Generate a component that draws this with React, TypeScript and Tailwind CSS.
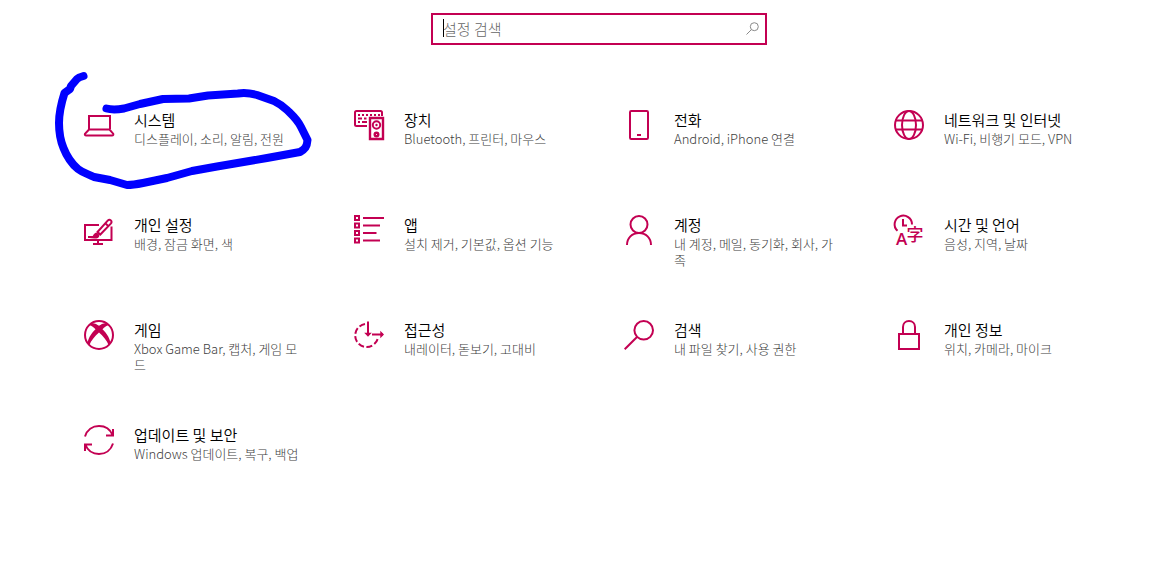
import type { ReactNode } from "react";

type Category = {
  title: string;
  description: string;
  icon: ReactNode;
};

const categories: Category[] = [
  {
    title: "시스템",
    description: "디스플레이, 소리, 알림, 전원",
    icon: (
      <>
        <path d="M5 19V6h21v13" />
        <path d="M5 19.500h20.500l3.700 4.200c.4.900 0 1.800-1.200 1.800H2.200c-1.200 0-1.600-.9-1.200-1.800z" />
      </>
    ),
  },
  {
    title: "장치",
    description: "Bluetooth, 프린터, 마우스",
    icon: (
      <>
        <path d="M13 16H2.500C1.500 16 1 15.500 1 14.500v-12C1 1.500 1.500 1 2.500 1h24c1 0 1.500.5 1.500 1.500V6" />
        <path d="M4 5h22" strokeDasharray="2 2" />
        <path d="M4 8.500h4M10 8.500h2.500M4 12h2M8 12h5" />
        <path d="M16 8h13v21H16z" strokeWidth="2.400" />
        <circle cx="22.500" cy="15" r="3.700" />
        <circle cx="22.500" cy="15" r="1.200" fill="currentColor" stroke="none" />
        <circle cx="22.500" cy="24.500" r="1.800" strokeWidth="2.400" />
      </>
    ),
  },
  {
    title: "전화",
    description: "Android, iPhone 연결",
    icon: (
      <>
        <rect x="6" y="1" width="18" height="28" rx="1.200" />
        <path d="M13 25h4" />
      </>
    ),
  },
  {
    title: "네트워크 및 인터넷",
    description: "Wi-Fi, 비행기 모드, VPN",
    icon: (
      <>
        <circle cx="15" cy="15" r="14" />
        <ellipse cx="15" cy="15" rx="7" ry="14" />
        <path d="M2 10.500h26M2 19.500h26" />
      </>
    ),
  },
  {
    title: "개인 설정",
    description: "배경, 잠금 화면, 색",
    icon: (
      <>
        <path d="M15 10H1v15h26.500V11.500M14 25v4M9 29h10" />
        <path d="M13.500 17 23.700 5.700c1-1.100 2.300-1.100 3.200-.3s.9 2.100-.1 3.200L16.300 19.500z" />
        <path d="m21.500 8.500 3 2.800" />
        <path d="M4 22.700c4 0 4.500-1 5.800-3.400 1.100-1.900 3.100-2.100 4.500-.8 1.600 1.500 1.400 3.300-.4 4.400-2 1.100-5.900.6-9.900-.2z" fill="currentColor" stroke="none" />
        <path d="M4 22h7" />
      </>
    ),
  },
  {
    title: "앱",
    description: "설치 제거, 기본값, 옵션 기능",
    icon: (
      <>
        <path d="M1 1h4v4H1zM1 8.500h4v4H1zM1 16h4v4H1zM1 23.500h4v4H1z" />
        <path d="M9 3h21M9 10.500h17M9 18h13.500M9 25.500h17" />
      </>
    ),
  },
  {
    title: "계정",
    description: "내 계정, 메일, 동기화, 회사, 가족",
    icon: (
      <>
        <circle cx="15" cy="9.500" r="8.500" />
        <path d="M3 30c0-7 5-12 12-12s12 5 12 12" />
      </>
    ),
  },
  {
    title: "시간 및 언어",
    description: "음성, 지역, 날짜",
    icon: (
      <>
        <path d="M3.500 15.800A8.700 8.700 0 1 1 18 9.500M9 4v6.500h4" />
        <g fill="currentColor" stroke="none">
          <text x="2" y="30" fontSize="17" fontWeight="600" fontFamily="Open Sans, sans-serif">A</text>
          <text x="12.500" y="26" fontSize="17" fontWeight="500" fontFamily="Noto Sans CJK KR, sans-serif">字</text>
        </g>
      </>
    ),
  },
  {
    title: "게임",
    description: "Xbox Game Bar, 캡처, 게임 모드",
    icon: (
      <>
        <circle cx="15" cy="15" r="14" />
        <path d="M7 3.500C9.500 2.500 13 4.300 15 5.700c2-1.400 5.500-3.200 8-2.200l2.500 1.700c-2.300-.3-5 1.800-7 4.100 4.700 4.500 8 10.200 7.800 14.200l-1.600 1.700c-1.700-4.500-5.700-9.400-9.700-12.700-4 3.300-8 8.200-9.700 12.700l-1.600-1.700c-.2-4 3.100-9.700 7.800-14.200-2-2.300-4.700-4.400-7-4.100z" fill="currentColor" stroke="none" />
      </>
    ),
  },
  {
    title: "접근성",
    description: "내레이터, 돋보기, 고대비",
    icon: (
      <>
        <path d="M11 4.100A11.500 11.500 0 1 0 24 17.500" strokeDasharray="6 2.500" />
        <path d="M14 1.500V15M18 14.500h11" />
        <path d="M10.200 12.800h7.600L14 16.800zM26.300 10.700v7.600l3.700-3.800z" fill="currentColor" stroke="none" />
      </>
    ),
  },
  {
    title: "검색",
    description: "내 파일 찾기, 사용 권한",
    icon: (
      <>
        <circle cx="19.700" cy="10.300" r="9.300" />
        <path d="M13 17 .7 29.300" />
      </>
    ),
  },
  {
    title: "개인 정보",
    description: "위치, 카메라, 마이크",
    icon: (
      <>
        <path d="M5 14h20v15H5z" />
        <path d="M9 14V7c0-3.700 2.500-6 6-6s6 2.300 6 6v7" />
      </>
    ),
  },
  {
    title: "업데이트 및 보안",
    description: "Windows 업데이트, 복구, 백업",
    icon: (
      <>
        <path d="M1 11.500C3 5 8.500 1 15 1c6 0 11.200 3.300 13.500 9M22 10.500h7V4" />
        <path d="M29 18.500C27 25 21.500 29 15 29c-6 0-11.200-3.300-13.500-9M8 19.500H1V26" />
      </>
    ),
  },
];

function CategoryLink({ title, description, icon }: Category) {
  return (
    <a href="#" className="flex items-start gap-5">
      <svg viewBox="0 0 30 30" fill="none" stroke="currentColor" strokeWidth="2" className="size-[30px] shrink-0 overflow-visible text-[#c30052]" aria-hidden="true">
        {icon}
      </svg>
      <span className="flex min-w-0 flex-col gap-px">
        <span className="text-[15px] leading-5 font-[350] text-black">{title}</span>
        <span className="text-[13px] leading-4 font-light break-all text-[#404040]">{description}</span>
      </span>
    </a>
  );
}

function PenStroke() {
  return (
    <svg className="pointer-events-none absolute -top-[42px] -left-[34px] h-[125px] w-[264px] max-w-none" viewBox="50 68 264 125" fill="none" stroke="#0000ff" strokeWidth="8" strokeLinecap="round" strokeLinejoin="round" aria-hidden="true">
      <path d="M83.500 76 C80 77 78 78 77 79 L71 86 L70 89 L64.500 93 C61 104 59 115 59 123 C59 134 61 142 63.500 148 C67 157 72 164 78 169 C83 173 88 174 94 177 L110 180 L127 185 C133 185 138 184 143 183 L167 178 L192 171 L217 166.500 L267 158 L300 152 C305 149 307 147 307.500 140 L301 127 C297 119 292 115 287 110 C282 105 278 103 274 101 L257 95 C250 93 244 92.500 238 93.500 L208 95.500 L189 98.500 L163 99 L140 104 L124 108.500 C118 109.500 112 110 106.500 108.500" />
    </svg>
  );
}

export default function App() {
  return (
    <main className="min-h-screen bg-white pt-[13px] pb-8 pl-6 font-['Noto_Sans_CJK_KR',sans-serif]">
      <label className="relative mx-auto flex h-8 w-full max-w-[336px] items-center border-2 border-[#c30052] pr-1.5 pb-px pl-2.5">
        <span className="absolute top-1 left-2.5 h-[18px] w-px bg-black" />
        <input type="search" aria-label="설정 검색" placeholder="설정 검색" className="min-w-0 flex-1 bg-transparent text-[15px] leading-5 font-light outline-none placeholder:text-[#666666]" />
        <svg viewBox="0 0 13 13" className="size-[13px]" fill="none" stroke="#8a8a8a" aria-hidden="true">
          <circle cx="8.300" cy="4.700" r="4" />
          <path d="M5.500 7.500.5 12.500" />
        </svg>
      </label>
      <nav className="mt-[65px] grid auto-rows-[minmax(105px,auto)] grid-cols-[repeat(auto-fit,220px)] justify-center gap-x-[50px]">
        {categories.map((category, index) => (
          <div key={category.title} className="relative">
            <CategoryLink {...category} />
            {index === 0 && <PenStroke />}
          </div>
        ))}
      </nav>
    </main>
  );
}
